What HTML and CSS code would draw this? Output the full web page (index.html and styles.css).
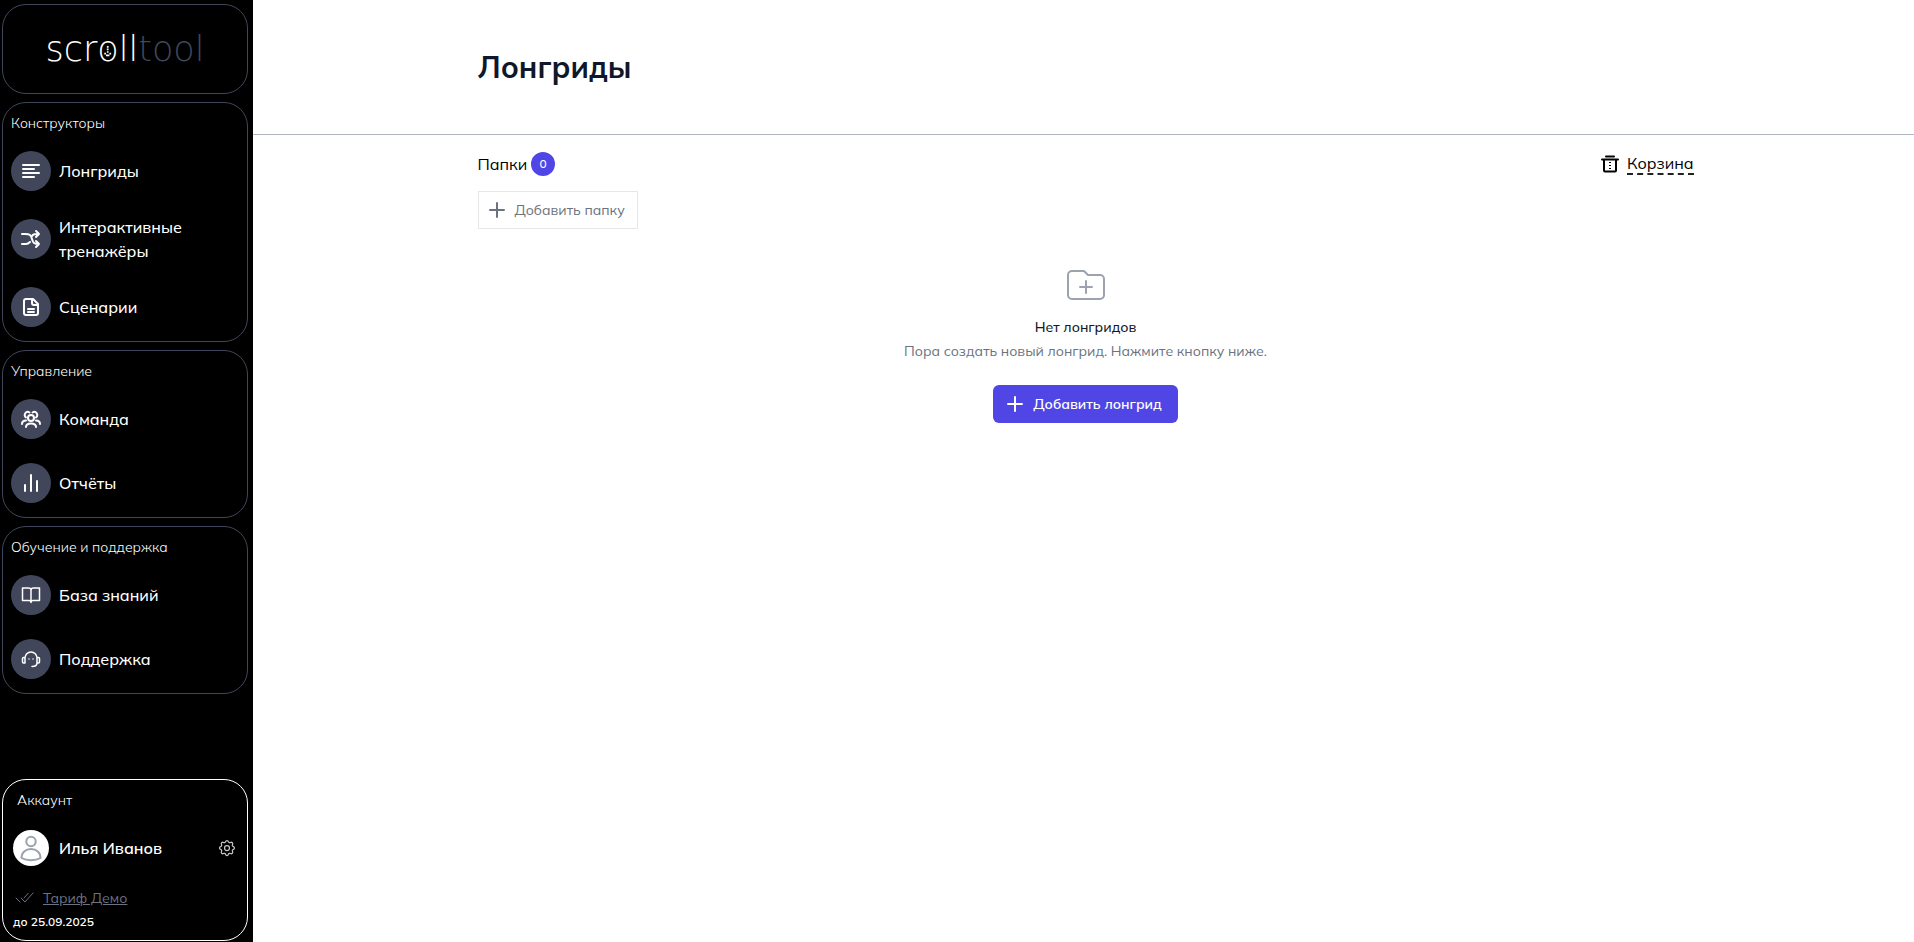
FILE: index.html
```
<!DOCTYPE html>
<html lang="ru">
<head>
  <meta charset="UTF-8">
  <meta name="viewport" content="width=device-width, initial-scale=1.0">
  <title>Лонгриды - scrolltool</title>
  <link rel="stylesheet" href="styles.css">
</head>
<body>
  <aside class="sidebar">
    <a class="card logo" href="#">
      <span class="logo-text">scr<span class="logo-o">o<svg class="logo-arrow" viewBox="0 0 8 14"><path d="M3 0h2v2H3zM3 3h2v2H3zM3 6h2v2H3zM0 8h2v2H0zM6 8h2v2H6zM2 10h4v2H2z"/></svg></span>ll<span class="logo-tool">tool</span></span>
    </a>

    <nav class="card">
      <h2 class="card-title">Конструкторы</h2>
      <a class="nav-item" href="#">
        <span class="nav-icon"><svg viewBox="0 0 20 20"><path d="M2 4h16M2 8h11M2 12h16M2 16h11"/></svg></span>
        Лонгриды
      </a>
      <a class="nav-item" href="#">
        <span class="nav-icon"><svg viewBox="0 0 20 20"><path d="M1 5h3c5 0 6 1 7 5s2 5 7 5M1 15h4c2 0 3-1 4-2M11 7c1-2 3-2 7-2M15 2l3 3-3 3M15 12l3 3-3 3"/></svg></span>
        Интерактивные тренажёры
      </a>
      <a class="nav-item" href="#">
        <span class="nav-icon"><svg viewBox="0 0 20 20"><path d="M12 2H5a2 2 0 0 0-2 2v12a2 2 0 0 0 2 2h10a2 2 0 0 0 2-2V7zM11 2v4a2 2 0 0 0 2 2h4M7 12h6M7 15h6"/></svg></span>
        Сценарии
      </a>
    </nav>

    <nav class="card">
      <h2 class="card-title">Управление</h2>
      <a class="nav-item" href="#">
        <span class="nav-icon"><svg viewBox="0 0 20 20"><circle cx="10" cy="9" r="3"/><path d="M5 18c0-2.500 2-3.500 5-3.500s5 1 5 3.500M5 8.500a2.800 2.800 0 1 1 3.500-5M15 8.500a2.800 2.800 0 1 0-3.500-5M1 15c0-2 1.500-3.500 4-3.500M19 15c0-2-1.500-3.500-4-3.500"/></svg></span>
        Команда
      </a>
      <a class="nav-item" href="#">
        <span class="nav-icon"><svg viewBox="0 0 20 20"><path d="M4 12v6M10 2v16M16 8v10"/></svg></span>
        Отчёты
      </a>
    </nav>

    <nav class="card">
      <h2 class="card-title">Обучение и поддержка</h2>
      <a class="nav-item" href="#">
        <span class="nav-icon nav-icon-thin"><svg viewBox="0 0 20 20"><path d="M10 5c0-1.500-1-2-2.500-2H1.500v12.500H8c1 0 2 .5 2 2 0-1.500 1-2 2-2h6.500V3h-6C11 3 10 3.500 10 5zv12"/></svg></span>
        База знаний
      </a>
      <a class="nav-item" href="#">
        <span class="nav-icon nav-icon-thin"><svg viewBox="0 0 20 20"><path d="M4 14V9a6 6 0 0 1 12 0v5c0 2-2 3.500-5 3.500M4 8.500H2.500a1 1 0 0 0-1 1V13a1 1 0 0 0 1 1H4M16 8.500h1.500a1 1 0 0 1 1 1V13a1 1 0 0 1-1 1H16M8 10v.1M12 10v.1"/></svg></span>
        Поддержка
      </a>
    </nav>

    <section class="card account">
      <h2 class="card-title">Аккаунт</h2>
      <div class="user">
        <svg class="avatar" viewBox="0 0 36 36"><circle class="avatar-bg" cx="18" cy="18" r="18"/><circle cx="18" cy="11.500" r="4.700"/><path d="M8.500 28c0-5.500 4-9 9.500-9s9.500 3.500 9.500 9c-5 3-14 3-19 0z"/></svg>
        <span class="user-name">Илья Иванов</span>
        <button class="settings" type="button" aria-label="Настройки">
          <svg viewBox="0 0 24 24"><path d="M10.325 4.317c.426-1.756 2.924-1.756 3.350 0a1.724 1.724 0 002.573 1.066c1.543-.94 3.310.826 2.370 2.370a1.724 1.724 0 001.065 2.572c1.756.426 1.756 2.924 0 3.350a1.724 1.724 0 00-1.066 2.573c.94 1.543-.826 3.310-2.370 2.370a1.724 1.724 0 00-2.572 1.065c-.426 1.756-2.924 1.756-3.350 0a1.724 1.724 0 00-2.573-1.066c-1.543.94-3.310-.826-2.370-2.370a1.724 1.724 0 00-1.065-2.572c-1.756-.426-1.756-2.924 0-3.350a1.724 1.724 0 001.066-2.573c-.94-1.543.826-3.310 2.370-2.370.996.608 2.296.07 2.572-1.065z"/><circle cx="12" cy="12" r="3"/></svg>
        </button>
      </div>
      <div class="plan">
        <svg class="plan-icon" viewBox="0 0 20 12"><path d="M1 6l4 4M6 6l4 4 8-9M9 6l4-4.500"/></svg>
        <a href="#">Тариф Демо</a>
      </div>
      <p class="plan-date">до 25.09.2025</p>
    </section>
  </aside>

  <main class="main">
    <header class="page-header">
      <div class="container">
        <h1>Лонгриды</h1>
      </div>
    </header>
    <div class="container">
      <div class="folders">
        <h2 class="folders-title">Папки <span class="badge">0</span></h2>
        <div class="trash">
          <svg class="trash-icon" viewBox="0 0 18 18"><path d="M5 1.500h8M1 4.500h16M3 5v10.500a1 1 0 0 0 1 1h10a1 1 0 0 0 1-1V5"/><path class="trash-dots" d="M9 7v7"/></svg>
          <a href="#">Корзина</a>
        </div>
      </div>
      <button class="btn btn-folder" type="button">
        <svg class="plus" viewBox="0 0 20 20"><path d="M10 3v14M3 10h14"/></svg>
        Добавить папку
      </button>
      <section class="empty">
        <svg class="empty-icon" viewBox="0 0 24 24"><path d="M9 13h6m-3-3v6m-9 1V7a2 2 0 012-2h6l2 2h6a2 2 0 012 2v8a2 2 0 01-2 2H5a2 2 0 01-2-2z"/></svg>
        <h3>Нет лонгридов</h3>
        <p>Пора создать новый лонгрид. Нажмите кнопку ниже.</p>
        <button class="btn btn-primary" type="button">
          <svg class="plus" viewBox="0 0 20 20"><path d="M10 3v14M3 10h14"/></svg>
          Добавить лонгрид
        </button>
      </section>
    </div>
  </main>
</body>
</html>
```
FILE: styles.css
```
* {
  box-sizing: border-box;
}
body {
  display: flex;
  min-height: 100vh;
  margin: 0;
  background: #fff;
  color: #000;
  font-family: Mulish, "Open Sans", sans-serif;
  font-size: 16px;
  line-height: 24px;
}
h1, h2, h3, p {
  margin: 0;
}
svg {
  flex: none;
  fill: none;
  stroke: currentColor;
  stroke-linecap: round;
  stroke-linejoin: round;
}
a {
  color: inherit;
  text-decoration: none;
}
button {
  font-family: inherit;
  cursor: pointer;
}

/* sidebar */
.sidebar {
  display: flex;
  flex: none;
  flex-direction: column;
  gap: 8px;
  width: 253px;
  padding: 4px 5px 0 2px;
  background: #000;
  color: #fff;
}
.card {
  padding: 10px 8px 2px;
  border: 1px solid #41465a;
  border-radius: 24px;
}
.card-title {
  margin-bottom: 6px;
  font-size: 14px;
  font-weight: 300;
  line-height: 20px;
}
.logo {
  display: flex;
  align-items: center;
  justify-content: center;
  height: 90px;
  padding: 0;
}
.logo-text {
  font-family: "DejaVu Sans Light", "DejaVu Sans", sans-serif;
  font-size: 35px;
  font-weight: 200;
  line-height: 40px;
}
.logo-o {
  display: inline-block;
  position: relative;
}
.logo-arrow {
  position: absolute;
  top: 17px;
  left: 0;
  width: 100%;
  height: 12px;
  fill: currentColor;
  stroke: none;
}
.logo-tool {
  color: #41465a;
}
.nav-item {
  display: flex;
  align-items: center;
  gap: 8px;
  padding: 12px 0;
  min-height: 64px;
  font-weight: 500;
}
.nav-icon {
  display: flex;
  flex: none;
  align-items: center;
  justify-content: center;
  width: 40px;
  height: 40px;
  margin: -4px 0;
  border-radius: 50%;
  background: #41465a;
}
.nav-icon svg {
  width: 20px;
  height: 20px;
  stroke-width: 2;
}
.nav-icon-thin svg {
  stroke-width: 1.5;
}
.account {
  margin-top: auto;
  margin-bottom: 1px;
  padding: 10px 10px 8px;
  border-color: #fff;
}
.account .card-title {
  padding-left: 4px;
}
.user {
  display: flex;
  align-items: center;
  gap: 10px;
  margin-top: 20px;
}
.avatar {
  width: 36px;
  height: 36px;
  color: #9ca3af;
  stroke-width: 2;
}
.avatar-bg {
  fill: #fff;
  stroke: none;
}
.user-name {
  flex: 1;
  font-weight: 600;
}
.settings {
  display: flex;
  padding: 0;
  border: 0;
  background: none;
  color: #c4c4c4;
}
.settings svg {
  width: 20px;
  height: 20px;
  stroke-width: 1.5;
}
.plan {
  display: flex;
  align-items: center;
  gap: 8px;
  margin-top: 22px;
  padding-left: 2px;
  color: #6b7280;
  font-size: 14px;
  line-height: 20px;
}
.plan a {
  text-decoration: underline;
}
.plan-icon {
  width: 20px;
  height: 12px;
}
.plan-date {
  margin-top: 4px;
  font-size: 12px;
  font-weight: 600;
  line-height: 20px;
}

/* content */
.main {
  flex: 1;
  min-width: 0;
}
.page-header {
  padding: 48px 0;
  border-bottom: 1px solid #b0b5c0;
}
.container {
  width: 100%;
  max-width: 1280px;
  margin: 0 auto;
  padding: 0 30px 0 34px;
}
h1 {
  color: #0f172a;
  font-size: 30px;
  font-weight: 700;
  line-height: 38px;
}
.folders {
  display: flex;
  align-items: center;
  justify-content: space-between;
  padding: 17px 0 15px;
}
.folders-title {
  display: flex;
  align-items: center;
  gap: 4px;
  font-size: 16px;
  font-weight: 400;
}
.badge {
  width: 24px;
  border-radius: 50%;
  background: #4f46e5;
  color: #fff;
  font-size: 12px;
  font-weight: 500;
  text-align: center;
}
.trash {
  display: flex;
  align-items: center;
  gap: 8px;
}
.trash-icon {
  width: 18px;
  height: 18px;
  stroke-width: 2;
}
.trash-dots {
  stroke-dasharray: 1 2;
  stroke-linecap: butt;
}
.trash a {
  border-bottom: 2px dashed #222;
  line-height: 20px;
}
.btn {
  display: inline-flex;
  align-items: center;
  gap: 8px;
  height: 38px;
  font-size: 14px;
  line-height: 20px;
}
.plus {
  width: 20px;
  height: 20px;
  stroke-width: 2;
}
.btn-folder {
  padding: 0 12px 0 8px;
  border: 1px solid #e5e7eb;
  background: #fff;
  color: #6b7280;
}
.empty {
  display: flex;
  flex-direction: column;
  align-items: center;
  margin-top: 32px;
  font-size: 14px;
  line-height: 20px;
}
.empty-icon {
  width: 48px;
  height: 48px;
  color: #9ca3af;
}
.empty h3 {
  margin-top: 8px;
  color: #111827;
  font-size: 14px;
  font-weight: 500;
}
.empty p {
  margin-top: 4px;
  color: #6b7280;
}
.btn-primary {
  margin-top: 24px;
  padding: 0 16px 0 12px;
  border: 0;
  border-radius: 6px;
  background: #4f46e5;
  color: #fff;
  font-weight: 600;
}
```
